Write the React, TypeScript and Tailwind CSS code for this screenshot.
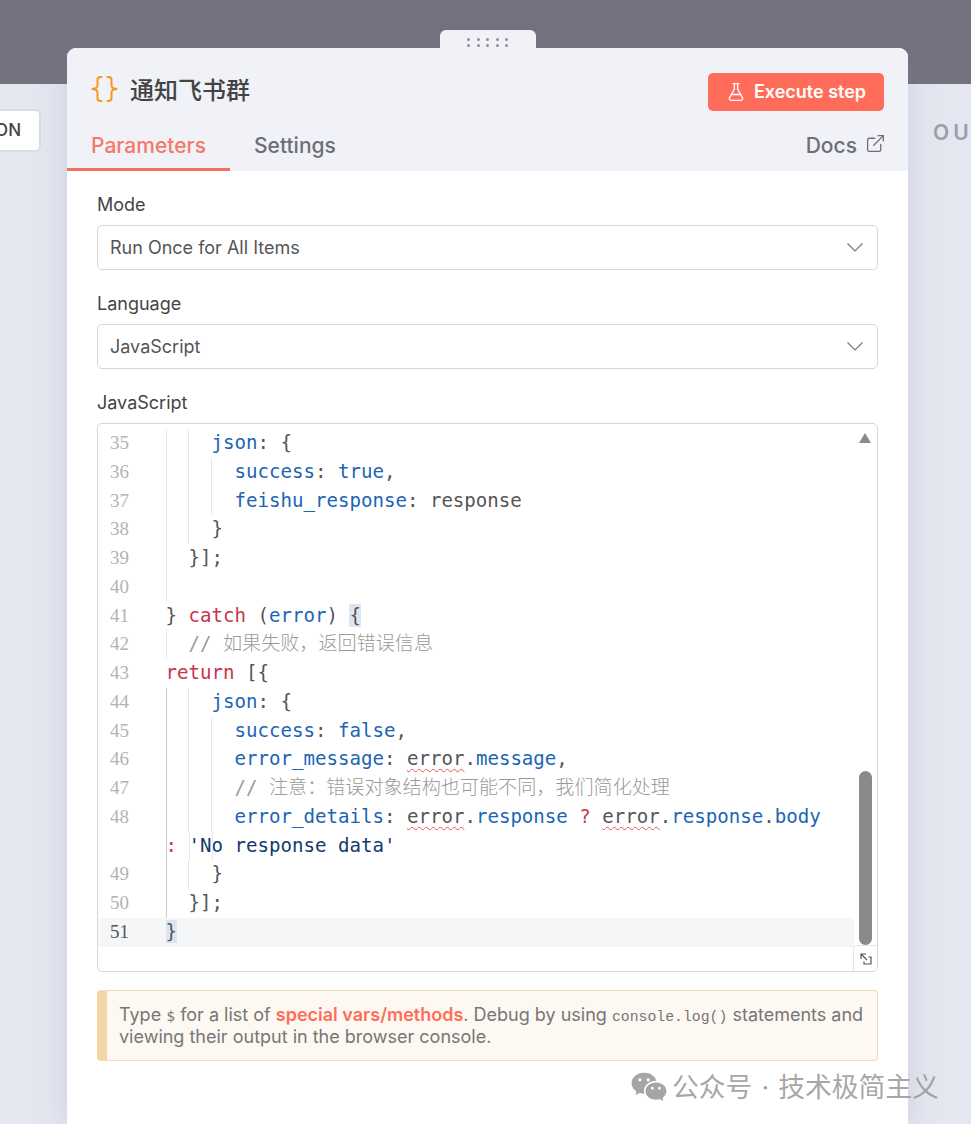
import { ExternalLink, FlaskConical } from 'lucide-react'
import { RiWechatFill } from 'react-icons/ri'

const mono = "font-['DejaVu_Sans_Mono','Noto_Sans_CJK_SC',monospace]"
const inter = "font-['Inter','Noto_Sans_CJK_SC',sans-serif]"

const P = ({ children }: { children: React.ReactNode }) => <span className="text-[#1c65b5]">{children}</span>
const K = ({ children }: { children: React.ReactNode }) => <span className="text-[#c9344c]">{children}</span>
const C = ({ children }: { children: React.ReactNode }) => <span className="text-[#9a9a9a] font-light">{children}</span>
const Err = () => <span className="underline decoration-wavy decoration-[#e0575b] decoration-1 underline-offset-[3px]">error</span>
const Match = ({ children }: { children: React.ReactNode }) => <span className="bg-[#dde5f0]">{children}</span>

// g = how many indent guides the line has, active = the darker first guide
const lines: { n?: number; g: number; active?: boolean; wrap?: boolean; cur?: boolean; code: React.ReactNode }[] = [
  { n: 35, g: 2, code: <><P>json</P>: {'{'}</> },
  { n: 36, g: 3, code: <><P>success</P>: <P>true</P>,</> },
  { n: 37, g: 3, code: <><P>feishu_response</P>: response</> },
  { n: 38, g: 2, code: <>{'}'}</> },
  { n: 39, g: 1, code: <>{'}'}];</> },
  { n: 40, g: 1, code: <></> },
  { n: 41, g: 0, code: <>{'} '}<K>catch</K> (<P>error</P>) <Match>{'{'}</Match></> },
  { n: 42, g: 1, code: <C>// 如果失败，返回错误信息</C> },
  { n: 43, g: 0, code: <><K>return</K> [{'{'}</> },
  { n: 44, g: 2, active: true, code: <><P>json</P>: {'{'}</> },
  { n: 45, g: 3, active: true, code: <><P>success</P>: <P>false</P>,</> },
  { n: 46, g: 3, active: true, code: <><P>error_message</P>: <Err />.<P>message</P>,</> },
  { n: 47, g: 3, active: true, code: <C>// 注意：错误对象结构也可能不同，我们简化处理</C> },
  { n: 48, g: 3, active: true, code: <><P>error_details</P>: <Err />.<P>response</P> <K>?</K> <Err />.<P>response</P>.<P>body</P></> },
  { g: 0, wrap: true, code: <><K>:</K> <span className="text-[#123b6d]">'No response data'</span></> },
  { n: 49, g: 2, active: true, code: <>{'}'}</> },
  { n: 50, g: 1, active: true, code: <>{'}'}];</> },
  { n: 51, g: 0, cur: true, code: <Match>{'}'}</Match> },
]

function CodeLine({ line }: { line: (typeof lines)[number] }) {
  const { n, g, active, wrap, cur, code } = line
  return (
    <div className={`flex h-[28.76px] leading-[28.76px] ${cur ? 'bg-[#f5f6f7]' : ''}`}>
      <div className={`w-[67.5px] shrink-0 pl-[12px] text-[19px] font-['Liberation_Serif',serif] ${cur ? 'text-[#555]' : 'text-[#b3b3b3]'}`}>{n}</div>
      <div className="relative flex-1 whitespace-pre text-[19.1px] text-[#555]">
        {Array.from({ length: g }).map((_, i) => (
          <span key={i} className={`inline-block w-[2ch] h-[28.76px] align-top border-l ${active && i === 0 ? 'border-[#c9cbd0]' : 'border-[#e6e7ec]'}`} />
        ))}
        {wrap && (
          <>
            <span className="absolute inset-y-0 left-0 border-l border-[#c9cbd0]" />
            <span className="absolute inset-y-0 left-[23px] border-l border-[#e6e7ec]" />
            <span className="absolute inset-y-0 left-[46px] border-l border-[#e6e7ec]" />
          </>
        )}
        {code}
      </div>
    </div>
  )
}

function Chevron() {
  return (
    <svg width="18" height="11" viewBox="0 0 18 11" fill="none" stroke="#77777f" strokeWidth="1.2" className="shrink-0">
      <path d="M1.5 1.5 9 9l7.5-7.5" />
    </svg>
  )
}

function Select({ value }: { value: string }) {
  return (
    <div className="flex h-[45px] items-center justify-between rounded-[5px] border border-[#d6d7da] bg-white pl-[12px] pr-[13px] text-[18px] text-[#555]">
      {value}
      <Chevron />
    </div>
  )
}

export default function App() {
  return (
    <div className={`flex h-[1124px] w-[971px] flex-col overflow-hidden bg-[#e4e7f0] ${inter}`}>
      <div className="h-[84px] shrink-0 bg-[#74727f]" />

      <div className="relative -mt-[54px] flex flex-1 min-h-0">
        {/* left canvas, node cut off by the panel */}
        <div className="w-[67px] shrink-0 pt-[79px]">
          <div className="ml-[-40px] flex h-[43px] w-[81px] items-center justify-end rounded-[6px] border-2 border-[#d9dce4] bg-white pr-[18px] text-[17px] font-medium text-[#444]">ON</div>
        </div>

        <div className="flex w-[841px] shrink-0 flex-col">
          {/* drag handle */}
          <div className="relative z-10 mx-auto -mb-[4px] flex h-[22px] w-[96px] flex-col items-center justify-center gap-[3.5px] rounded-t-[6px] bg-[#f0f2f8] pt-[3px]">
            {[0, 1].map(r => (
              <div key={r} className="flex gap-[6.5px]">
                {[0, 1, 2, 3, 4].map(d => <span key={d} className="h-[3px] w-[3px] rounded-full bg-[#8f8f9b]" />)}
              </div>
            ))}
          </div>

          <div className="flex flex-1 flex-col rounded-t-[9px] bg-white shadow-[0_0_30px_rgba(120,125,160,0.22)]">
            {/* header */}
            <div className="h-[123px] shrink-0 rounded-t-[9px] bg-[#f0f2f8]">
              <div className="flex items-start justify-between pl-[24px] pr-[24px] pt-[25px]">
                <div className="flex h-[32px] items-center gap-[12px]">
                  <svg width="27" height="28" viewBox="0 0 27 28" fill="none" stroke="#f7981d" strokeWidth="2" strokeLinecap="round" strokeLinejoin="round">
                    <path d="M10.500 2H9.500C7.600 2 6.500 3 6.500 4.800v5.800C6.500 12.400 5 13.700 1.500 14c3.500.3 5 1.600 5 3.400v5.800C6.500 25 7.600 26 9.500 26h1" />
                    <path d="M16.500 2h1c1.900 0 3 1 3 2.800v5.800c0 1.800 1.500 3.100 5 3.400-3.500.3-5 1.600-5 3.400v5.800c0 1.800-1.100 2.800-3 2.800h-1" />
                  </svg>
                  <span className="pt-[3px] text-[24px] font-medium text-[#444]">通知飞书群</span>
                </div>
                <button className="flex h-[38px] w-[176px] items-center justify-center gap-[8px] rounded-[5px] bg-[#ff6d5a] pb-[1px] text-[18px] font-semibold text-white">
                  <FlaskConical className="h-[20px] w-[20px]" strokeWidth={1.6} />
                  Execute step
                </button>
              </div>
              <div className="mt-[10px] flex h-[50px] items-stretch justify-between pr-[22px]">
                <div className="flex">
                  <div className="flex w-[163px] items-center border-b-[3px] border-[#f36f5e] pl-[24px] pt-[2px] text-[21px] font-medium text-[#f67866]">Parameters</div>
                  <div className="flex items-center pb-[1px] pl-[24px] text-[21px] font-medium text-[#6e6e78]">Settings</div>
                </div>
                <div className="flex items-center gap-[8px] pb-[1px] text-[21px] font-medium text-[#6e6e78]">
                  Docs
                  <ExternalLink className="mb-[4px] h-[21px] w-[21px]" strokeWidth={1.5} />
                </div>
              </div>
            </div>

            {/* form */}
            <div className="flex flex-col px-[30px] text-[18px] text-[#444]">
              <div className="mb-[8px] mt-[22px] h-[24px] leading-[24px]">Mode</div>
              <Select value="Run Once for All Items" />
              <div className="mb-[8px] mt-[22px] h-[24px] leading-[24px]">Language</div>
              <Select value="JavaScript" />
              <div className="mb-[8px] mt-[22px] h-[24px] leading-[24px]">JavaScript</div>

              <div className={`relative h-[549px] overflow-hidden rounded-[5px] border border-[#d6d7da] bg-white pr-[23px] pt-[5px] ${mono}`}>
                {lines.map((l, i) => <CodeLine key={i} line={l} />)}

                {/* scrollbar and resize corner lie over the code */}
                <div className="absolute right-[6px] top-[9px] h-0 w-0 border-x-[6px] border-b-[10px] border-x-transparent border-b-[#8a8a8a]" />
                <div className="absolute bottom-[26px] right-[5px] h-[174px] w-[13px] rounded-full bg-[#8a8a8a]" />
                <div className="absolute bottom-0 right-0 flex h-[26px] w-[24px] items-center justify-center rounded-tl-[4px] border-l border-t border-[#e3e4e8] bg-white">
                  <svg width="14" height="14" viewBox="0 0 14 14" fill="none" stroke="#555" strokeWidth="1.200">
                    <path d="M2 7V2h5M2 2l6 6M5 9.500v2.500h7V5H9.500" />
                  </svg>
                </div>
              </div>

              <div className="mt-[18px] rounded-[4px] border border-l-[10px] border-[#f0dcb8] border-l-[#f3d6a5] bg-[#fdf9f2] pb-[12px] pl-[12px] pr-[12px] pt-[13px] text-[18px] leading-[22px] text-[#767676]">
                Type <code className={`text-[14.800px] leading-none ${mono}`}>$</code> for a list of <span className="font-semibold text-[#ff6d5a]">special vars/methods</span>. Debug by using <code className="font-['Liberation_Mono',monospace] text-[14.800px] leading-none">console.log()</code> statements and viewing their output in the browser console.
              </div>
            </div>
          </div>
        </div>

        {/* right canvas */}
        <div className="w-[63px] shrink-0 overflow-hidden pl-[25px] pt-[87px]">
          <div className="whitespace-nowrap text-[21px] font-semibold tracking-[4px] text-[#9a9ea9]">OUTPUT</div>
        </div>

        {/* article watermark lies over the screenshot */}
        <div className="absolute left-[630px] top-[1037px] flex items-center whitespace-nowrap text-[26.800px] text-[#8f8f8f]/80">
          <RiWechatFill className="mr-[4px] h-[38px] w-[38px]" />
          公众号<span className="mx-[9px]">·</span>技术极简主义
        </div>
      </div>
    </div>
  )
}
